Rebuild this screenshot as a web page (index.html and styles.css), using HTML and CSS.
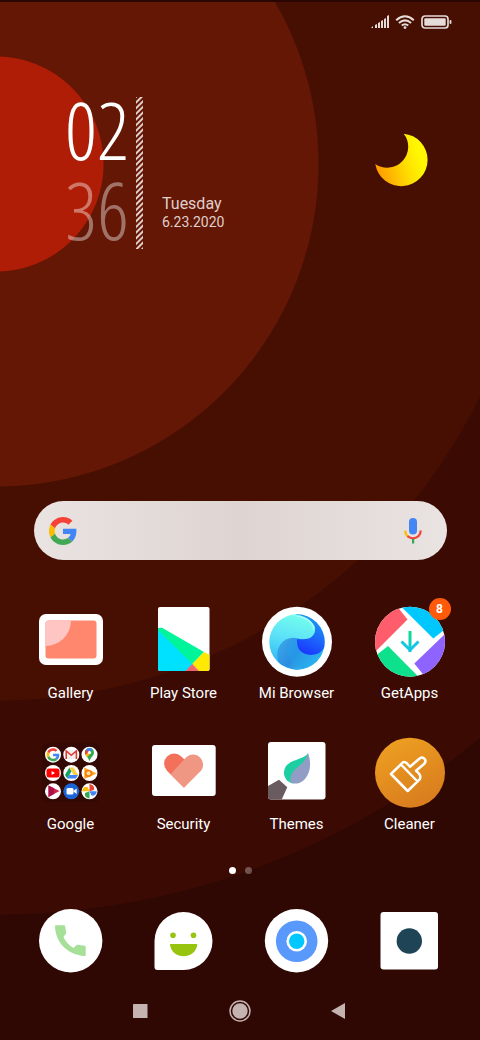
FILE: index.html
```html
<!DOCTYPE html>
<html lang="en">

<head>
    <meta charset="UTF-8">
    <meta name="viewport" content="width=device-width, initial-scale=1.0">
    <title>Home</title>
    <link rel="stylesheet" href="styles.css">
</head>

<body>
    <div class="screen">
        <header class="status-bar">
            <svg width="18" height="14" viewBox="0 0 18 14" fill="currentColor" role="img" aria-label="Signal">
                <path d="M0 13 L2 11 V13 Z M4 13 V10 L6 9 V13 Z M7 13 V8 L9 7 V13 Z M10 13 V6 L12 5 V13 Z M13 13 V4 L15 3 V13 Z M16 13 V1 L18 0 V13 Z" />
            </svg>
            <svg width="20" height="14" viewBox="0 0 20 14" fill="none" stroke="currentColor" stroke-width="2" role="img" aria-label="Wi-Fi">
                <path d="M1.2 5.2 Q10 -2.6 18.8 5.2 M3.9 8 Q10 2.7 16.1 8 M6.7 10.6 Q10 7.8 13.3 10.6" />
                <circle cx="10" cy="12.6" r="1.4" fill="currentColor" stroke="none" />
            </svg>
            <svg width="31" height="14" viewBox="0 0 31 14" role="img" aria-label="Battery">
                <rect x="1" y="1" width="26" height="12" rx="3" fill="none" stroke="currentColor" stroke-width="1.7" />
                <rect x="3.3" y="3.3" width="21.4" height="7.4" rx="1" fill="currentColor" />
                <rect x="28.6" y="5" width="1.8" height="4" rx=".8" fill="currentColor" />
            </svg>
        </header>

        <section class="widgets">
            <div class="clock">
                <div class="hours">02</div>
                <div class="minutes">36</div>
            </div>
            <div class="stripes"></div>
            <div class="date">
                <div class="day">Tuesday</div>
                <div class="full-date">6.23.2020</div>
            </div>
            <svg class="moon" width="54" height="54" viewBox="0 0 54 54" role="img" aria-label="Clear night">
                <defs>
                    <linearGradient id="moonFill" x1="0" y1=".7" x2="1" y2=".4">
                        <stop offset="0" stop-color="#ff9800" />
                        <stop offset=".55" stop-color="#ffdc00" />
                        <stop offset=".85" stop-color="#fff800" />
                    </linearGradient>
                </defs>
                <path fill="url(#moonFill)" d="M28.7 .7 A26.3 26.3 0 1 1 .3 31 A21 21 0 0 0 28.7 .7 Z" />
            </svg>
        </section>

        <form class="search">
            <svg width="28" height="28" viewBox="0 0 48 48" aria-hidden="true">
                <g id="gLogo">
                    <path fill="#f44336" d="M24 9.5c3.54 0 6.71 1.22 9.21 3.6l6.85-6.85C35.9 2.38 30.47 0 24 0 14.62 0 6.51 5.38 2.56 13.22l7.98 6.19C12.43 13.72 17.74 9.5 24 9.5z" />
                    <path fill="#4285f4" d="M46.98 24.55c0-1.57-.15-3.09-.38-4.55H24v9.02h12.94c-.58 2.96-2.26 5.48-4.78 7.18l7.73 6c4.51-4.18 7.09-10.36 7.09-17.65z" />
                    <path fill="#fbbc05" d="M10.53 28.59c-.48-1.45-.76-2.99-.76-4.59s.27-3.14.76-4.59l-7.98-6.19C.92 16.46 0 20.12 0 24c0 3.88.92 7.54 2.56 10.78l7.97-6.19z" />
                    <path fill="#43a853" d="M24 48c6.48 0 11.93-2.13 15.89-5.81l-7.73-6c-2.15 1.45-4.92 2.3-8.16 2.3-6.26 0-11.57-4.22-13.47-9.91l-7.98 6.19C6.51 42.62 14.62 48 24 48z" />
                </g>
            </svg>
            <input type="text" class="search-input" aria-label="Search">
            <button type="button" class="mic" aria-label="Voice search">
                <svg width="18" height="26" viewBox="0 0 18 26">
                    <rect x="5" y="0" width="8" height="16.5" rx="4" fill="#4285f4" />
                    <path d="M1.3 12.5 Q1.3 16.5 4 18.6" fill="none" stroke="#fbbc05" stroke-width="2.2" />
                    <path d="M3.5 18.2 Q9 22.5 14.5 18.2 Q16.7 16 16.7 12.5" fill="none" stroke="#f0443a" stroke-width="2.2" />
                    <rect x="8" y="21" width="2.2" height="4.5" fill="#34a853" />
                </svg>
            </button>
        </form>

        <main class="apps">
            <a class="app" href="#">
                <svg class="icon" viewBox="0 0 72 72" aria-hidden="true">
                    <rect x="4" y="9" width="64" height="51" rx="7" fill="#fff" />
                    <rect x="10.5" y="15.5" width="51" height="38" rx="3" fill="#ff876e" />
                    <path d="M10.5 41 V18.5 A3 3 0 0 1 13.5 15.5 H36 A25.5 25.5 0 0 1 10.5 41 Z" fill="#ffc5c2" />
                </svg>
                <span class="label">Gallery</span>
            </a>
            <a class="app" href="#">
                <svg class="icon" viewBox="0 0 72 72" aria-hidden="true">
                    <clipPath id="playClip">
                        <rect x="10" y="2" width="51.5" height="64" rx="2" />
                    </clipPath>
                    <g clip-path="url(#playClip)">
                        <rect x="10" y="2" width="52" height="64" fill="#fff" />
                        <path d="M10 23 L45 59 L37.5 67 H10 Z" fill="#00e0ff" />
                        <path d="M10 25 V23.5 Q12 22.3 14.5 23 L56 47 L44.3 59 Z" fill="#00f59a" />
                        <path d="M56 47 L62 50 V67 H52 L44.3 59 Z" fill="#ffe900" />
                        <path d="M44.3 59 L52 67 H36.5 Z" fill="#f1646b" />
                    </g>
                </svg>
                <span class="label">Play Store</span>
            </a>
            <a class="app" href="#">
                <svg class="icon" viewBox="0 0 72 72" aria-hidden="true">
                    <defs>
                        <linearGradient id="miLight" gradientUnits="userSpaceOnUse" x1="36" y1="9" x2="22" y2="60">
                            <stop offset="0" stop-color="#74ffec" />
                            <stop offset=".5" stop-color="#5ce0f8" />
                            <stop offset="1" stop-color="#2cb8f4" />
                        </linearGradient>
                        <linearGradient id="miDark" x1=".8" y1="0" x2=".4" y2="1">
                            <stop offset="0" stop-color="#20a2f4" />
                            <stop offset="1" stop-color="#1a38ff" />
                        </linearGradient>
                        <linearGradient id="miLow" x1="0" y1="0" x2="1" y2=".5">
                            <stop offset="0" stop-color="#3cabec" />
                            <stop offset=".5" stop-color="#2c8de0" />
                            <stop offset="1" stop-color="#35cff8" />
                        </linearGradient>
                        <clipPath id="miClip">
                            <circle cx="36" cy="37" r="27.7" />
                        </clipPath>
                    </defs>
                    <circle cx="36" cy="36.7" r="35" fill="#fff" />
                    <g clip-path="url(#miClip)">
                        <rect x="8" y="9" width="56" height="56" fill="url(#miLight)" />
                        <path d="M37 33 Q25 31 19 40 Q14 48 18 59 L36 66 H64 V40 Z" fill="url(#miLow)" />
                        <path d="M37 33 Q25 38 27 49 Q29 59 42 64 L62 55 L60 40 Z" fill="#239fe9" opacity=".55" />
                        <path d="M34 9 H65 V38 Q62 50 50 50 Q35 49 36 34 Q47 36 53 29 Q57 17 34 9 Z" fill="url(#miDark)" />
                        <path d="M34 33 Q43 35 49 33 Q55 29 54 22 Q49 11 32 9 L24 25 Z" fill="url(#miLight)" />
                        <path d="M30 10.5 Q46 9.5 52 19 Q54 23 52.5 26 Q52 13 30 10.5 Z" fill="#c4fff8" opacity=".75" />
                    </g>
                </svg>
                <span class="label">Mi Browser</span>
            </a>
            <a class="app" href="#">
                <svg class="icon" viewBox="0 0 72 72" aria-hidden="true">
                    <defs>
                        <clipPath id="getClip">
                            <circle cx="36" cy="36.7" r="35" />
                        </clipPath>
                        <linearGradient id="getArrow" x1="0" y1="0" x2="0" y2="1">
                            <stop offset="0" stop-color="#0fdd84" />
                            <stop offset="1" stop-color="#11c4e8" />
                        </linearGradient>
                    </defs>
                    <g clip-path="url(#getClip)">
                        <rect width="72" height="72" fill="#fff" />
                        <path d="M22 0 L33.5 14.5 L2 46 L-8 40 V0 Z" fill="#ff5c6c" />
                        <path d="M25.5 0 L59.3 33.5 L74 22 V0 Z" fill="#00c8ff" />
                        <path d="M74 26 L40.3 58.5 L52 73 H74 Z" fill="#8f63ff" />
                        <path d="M46 73.3 L14 41 L0 52 V73 Z" fill="#0de18c" />
                    </g>
                    <path d="M34.5 26 H37.5 V47 H34.5 Z" fill="url(#getArrow)" />
                    <path d="M27.5 36.5 L36 45 L44.5 36.5" fill="none" stroke="#14c6e2" stroke-width="3" />
                </svg>
                <span class="label">GetApps</span>
                <span class="badge">8</span>
            </a>
            <a class="app" href="#">
                <svg class="icon" viewBox="0 0 72 72" aria-hidden="true">
                    <rect x="7" y="7" width="58" height="59" rx="5" fill="#340904" />
                    <g fill="#fff">
                        <circle cx="18" cy="18.7" r="8" />
                        <circle cx="36.3" cy="18.7" r="8" />
                        <circle cx="54.5" cy="18.7" r="8" />
                        <circle cx="18" cy="37" r="8" />
                        <circle cx="36.3" cy="37" r="8" />
                        <circle cx="54.5" cy="37" r="8" />
                        <circle cx="18" cy="55.3" r="8" />
                        <circle cx="36.3" cy="55.3" r="8" fill="#1b66d6" />
                        <circle cx="54.5" cy="55.3" r="8" />
                    </g>
                    <use href="#gLogo" transform="translate(11.6 12.3) scale(.27)" />
                    <!-- mail -->
                    <rect x="31" y="14.5" width="10.6" height="8.4" fill="#eee" />
                    <path d="M31.2 23 V15 L36.3 19.3 L41.4 15 V23" fill="none" stroke="#de3b30" stroke-width="1.6" />
                    <!-- maps -->
                    <path d="M54.5 25.5 C53.5 21 50 20 50 16.5 A4.5 4.5 0 0 1 59 16.5 C59 20 55.5 21 54.5 25.5 Z" fill="#34a853" />
                    <path d="M50.6 18.8 A4.5 4.5 0 0 1 51 13.6 L54.5 16.5 Z" fill="#ea4335" />
                    <path d="M51 13.6 Q54 10.8 57.3 13 L54.5 16.5 Z" fill="#4285f4" />
                    <path d="M50.6 18.8 L54 15.5 L55.5 17.5 L52 21.3 Z" fill="#fbbc05" />
                    <circle cx="54.5" cy="16.5" r="1.6" fill="#fff" />
                    <!-- video -->
                    <rect x="11.5" y="32.5" width="13" height="9" rx="2.5" fill="#f00" />
                    <path d="M16.6 35 L20 37 L16.6 39 Z" fill="#fff" />
                    <!-- drive -->
                    <path d="M34.3 31.5 L36.5 35.3 L32.2 42.5 L30 39 Z" fill="#13a160" />
                    <path d="M34.3 31.5 H38.7 L43 39 H38.6 Z" fill="#ffcf48" />
                    <path d="M34.2 39 H43 L40.8 42.5 H32.2 Z" fill="#4285f4" />
                    <!-- music -->
                    <path d="M49.3 31.5 L61.5 37.5 L49.3 43 Z" fill="#ff9f1c" />
                    <circle cx="53.5" cy="37.3" r="3.6" fill="#f57c00" />
                    <circle cx="53.5" cy="37.3" r="2" fill="#ffe0a3" />
                    <!-- movies -->
                    <path d="M13.5 49.5 L24.5 55 L13.5 61 Z" fill="#d8224c" />
                    <path d="M13.5 49.5 L19 52.2 V58 L13.5 61 Z" fill="#a9134a" />
                    <!-- duo -->
                    <rect x="31.5" y="52" width="7" height="6.6" rx="1.5" fill="#fff" />
                    <path d="M38 55.3 L41.7 52.5 V58 Z" fill="#fff" />
                    <!-- photos -->
                    <path d="M54.5 55.3 V48 Q60 49 59 54 Z" fill="#ea4335" />
                    <path d="M54.5 55.3 H61.8 Q61 60.5 56.5 59.5 Z" fill="#4285f4" />
                    <path d="M54.5 55.3 V62.5 Q49 61.5 50 57 Z" fill="#34a853" />
                    <path d="M54.5 55.3 H47.2 Q48 50 52.5 51 Z" fill="#fbbc05" />
                </svg>
                <span class="label">Google</span>
            </a>
            <a class="app" href="#">
                <svg class="icon" viewBox="0 0 72 72" aria-hidden="true">
                    <rect x="4" y="9" width="63.7" height="51" rx="3" fill="#fff" />
                    <path d="M36 51.7 L19 34.7 A10 10 0 0 1 33.3 20.5 L36 23 L46 30 Z" fill="#f3705a" />
                    <path d="M22.5 38.2 L38.8 20.8 A10 10 0 0 1 53 34.7 L36 51.7 Z" fill="#f09784" />
                </svg>
                <span class="label">Security</span>
            </a>
            <a class="app" href="#">
                <svg class="icon" viewBox="0 0 72 72" aria-hidden="true">
                    <rect x="7" y="6" width="57.5" height="57.5" rx="3" fill="#fff" />
                    <path d="M7 50 L18 43.7 L26.3 51.3 L20.7 63.5 H10 A3 3 0 0 1 7 60.5 Z" fill="#6a5b60" />
                    <path d="M47 17 C43 24 28 23 24 32 C21 39 25 46 32 47.5 C38 45 45 28 47 17 Z" fill="#1bcfa3" />
                    <path d="M47 17 C51 28 49 38 43 44 C39 48 33 48.5 29.5 46.3 C28 31 43 32 47 17 Z" fill="#929dc5" />
                </svg>
                <span class="label">Themes</span>
            </a>
            <a class="app" href="#">
                <svg class="icon" viewBox="0 0 72 72" aria-hidden="true">
                    <defs>
                        <linearGradient id="cleanFill" x1=".2" y1="0" x2=".7" y2="1">
                            <stop offset="0" stop-color="#eea021" />
                            <stop offset="1" stop-color="#d87b1e" />
                        </linearGradient>
                    </defs>
                    <circle cx="36" cy="36.7" r="35" fill="url(#cleanFill)" />
                    <path d="M17 38 L29 26.3 Q31 24.5 36 30.8 L45.3 22.7 C49.5 19.5 53.5 24.5 50 28 L42 34.8 Q48 39.5 45.7 43.3 L33.7 55 Z M27 28.5 L43.5 45.5" fill="none" stroke="#fff" stroke-width="2.5" stroke-linejoin="round" />
                </svg>
                <span class="label">Cleaner</span>
            </a>
        </main>

        <div class="pages">
            <span class="dot active"></span>
            <span class="dot"></span>
        </div>

        <div class="dock">
            <a class="app" href="#" aria-label="Phone">
                <svg class="icon" viewBox="0 0 72 72">
                    <circle cx="35.7" cy="35.7" r="31.7" fill="#fff" />
                    <path d="M21 20.3 H29 Q30 20.3 30.2 21.3 L31.3 28 L28.5 32 Q31.5 39 38.5 43 L42 39.7 L49.7 40.7 Q50.7 40.8 50.7 41.8 V50 Q50.7 51 49.7 51 C33 50 20.5 38 20 21.3 Q20 20.3 21 20.3 Z" fill="#a5df98" />
                </svg>
            </a>
            <a class="app" href="#" aria-label="Messages">
                <svg class="icon" viewBox="0 0 72 72">
                    <path d="M35.5 7 A29 29 0 0 1 35.5 65 H9.5 Q6.5 65 6.5 62 V36 A29 29 0 0 1 35.5 7 Z" fill="#fff" />
                    <circle cx="25" cy="30.3" r="2.8" fill="#96c40f" />
                    <circle cx="45.5" cy="30.3" r="2.8" fill="#96c40f" />
                    <path d="M22 39 H49.3 C49 46 43 51.3 35.7 51.3 C28 51.3 22.3 46 22 39 Z" fill="#96c40f" />
                </svg>
            </a>
            <a class="app" href="#" aria-label="Browser">
                <svg class="icon" viewBox="0 0 72 72">
                    <circle cx="35.5" cy="35.7" r="31.7" fill="#fff" />
                    <circle cx="35.7" cy="36.3" r="20.8" fill="#5899fb" />
                    <circle cx="35.7" cy="36.3" r="10.3" fill="#fff" />
                    <circle cx="35.7" cy="36.3" r="7.7" fill="#00c8ff" />
                </svg>
            </a>
            <a class="app" href="#" aria-label="Camera">
                <svg class="icon" viewBox="0 0 72 72">
                    <rect x="6.5" y="7" width="57.5" height="57.5" rx="3" fill="#fff" />
                    <circle cx="35.3" cy="36" r="12.7" fill="#1f4455" />
                </svg>
            </a>
        </div>

        <nav class="nav-bar">
            <button type="button" class="nav-btn" aria-label="Recent apps">
                <svg width="24" height="24" viewBox="0 0 24 24" fill="currentColor">
                    <rect x="4" y="5" width="14.5" height="14" rx=".5" />
                </svg>
            </button>
            <button type="button" class="nav-btn" aria-label="Home">
                <svg width="24" height="24" viewBox="0 0 24 24" fill="currentColor">
                    <circle cx="12" cy="12" r="10" fill="none" stroke="currentColor" stroke-width="1.5" />
                    <circle cx="12" cy="12" r="7.7" />
                </svg>
            </button>
            <button type="button" class="nav-btn" aria-label="Back">
                <svg width="24" height="24" viewBox="0 0 24 24" fill="currentColor">
                    <path d="M18 4 V20 L4 12 Z" />
                </svg>
            </button>
        </nav>
    </div>
</body>

</html>
```
FILE: styles.css
```css
* {
    box-sizing: border-box;
}

body {
    margin: 0;
    font-family: Roboto, "Liberation Sans", sans-serif;
    color: #fff;
    background-color: #2f0703;
}

.screen {
    display: flex;
    flex-direction: column;
    min-height: 100vh;
    border-top: 2px solid #2a0502;
    /* Concentric wallpaper rings */
    background: radial-gradient(circle at -4px 162px,
            #b01d06 107px, #631704 108px,
            #631704 322px, #460f02 323px,
            #460f02 536px, #3a0a03 537px,
            #3a0a03 750px, #2f0703 751px);
}

.status-bar {
    display: flex;
    justify-content: flex-end;
    align-items: center;
    gap: 6px;
    padding: 13px 28px 0;
    color: #e5dbd9;
}

.widgets {
    display: flex;
    padding: 60px 51px 0 65px;
    height: 220px;
}

.clock {
    width: 71px;
    font-family: "Open Sans Condensed Light", "Roboto Condensed", Roboto, sans-serif;
    font-size: 80px;
    font-weight: 300;
    line-height: 80px;
}

.minutes {
    color: rgba(255, 255, 255, 0.4);
}

.stripes {
    width: 7px;
    height: 152px;
    margin-top: 8px;
    background: repeating-linear-gradient(-45deg, #e0cfcb 0 1px, transparent 2px 3px, #e0cfcb 4px);
}

.date {
    padding: 106px 0 0 19px;
    color: #e0cfcb;
}

.day {
    font-size: 16px;
    line-height: 18px;
}

.full-date {
    font-size: 14px;
    line-height: 18px;
}

.moon {
    margin-top: 44px;
    margin-left: auto;
}

.search {
    display: flex;
    align-items: center;
    height: 59px;
    margin: 252px 33px 0 34px;
    padding: 0 25px 0 15px;
    border-radius: 30px;
    background: linear-gradient(90deg, #e9e3e1, #ded5d2 50%, #e9e3e1);
}

.search-input {
    flex: 1;
    min-width: 0;
    height: 40px;
    padding: 0 12px;
    border: none;
    outline: none;
    background: transparent;
    font-size: 16px;
}

button {
    padding: 0;
    border: none;
    background: none;
    color: inherit;
    cursor: pointer;
}

button svg {
    display: block;
}

.apps,
.dock {
    display: grid;
    grid-template-columns: repeat(4, 1fr);
    padding: 0 14px;
}

.apps {
    margin-top: 45px;
    row-gap: 33px;
}

.app {
    position: relative;
    display: flex;
    flex-direction: column;
    align-items: center;
    color: #fff;
    text-decoration: none;
}

.icon {
    width: 72px;
    height: 72px;
}

.label {
    margin-top: 6px;
    font-size: 15px;
    line-height: 20px;
}

.badge {
    position: absolute;
    top: -7px;
    left: calc(50% + 19px);
    width: 22px;
    height: 22px;
    border-radius: 50%;
    background-color: #ff5a0a;
    font-size: 12px;
    font-weight: bold;
    line-height: 22px;
    text-align: center;
}

.pages {
    display: flex;
    justify-content: center;
    gap: 9px;
    margin: 33px 0 31px;
}

.dot {
    width: 7px;
    height: 7px;
    border-radius: 50%;
    background-color: rgba(255, 255, 255, 0.3);
}

.dot.active {
    background-color: #fff;
}

.nav-bar {
    display: flex;
    justify-content: center;
    gap: 75px;
    margin-top: 22px;
    padding-bottom: 17px;
    color: #c4b3b0;
}
```
